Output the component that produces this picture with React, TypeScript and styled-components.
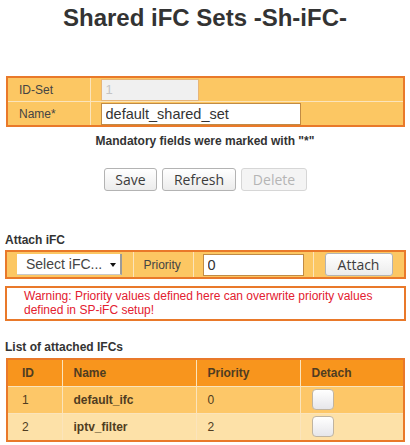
import styled, { createGlobalStyle } from "styled-components";

const GlobalStyle = createGlobalStyle`
  body {
    margin: 0;
    background: #ffffff;
    font-family: "Liberation Sans", Arial, sans-serif;
    font-size: 12px;
    color: #333333;
  }
`;

const ORANGE = "#e9792a";
const FILL = "#fcc763";
const LINE = "#fbe4bb";

const Page = styled.div`
  width: 410px;
  padding: 0 5px;
  box-sizing: border-box;
`;

const Title = styled.h1`
  margin: 4px 0 0;
  font-size: 24px;
  line-height: 28px;
  font-weight: bold;
  text-align: center;
  color: #333333;
`;

const FormTable = styled.table`
  width: 399px;
  margin: 44px 0 0 1px;
  border-collapse: collapse;
  border: 2px solid ${ORANGE};
  background: ${FILL};
  td {
    height: 23px;
    padding: 0;
    border: 1px solid ${LINE};
  }
`;

const LabelCell = styled.td`
  width: 83px;
  padding-left: 11px !important;
  box-sizing: border-box;
  color: #444444;
`;

const ValueCell = styled.td`
  padding-left: 10px !important;
`;

const TextInput = styled.input<{ $width: number; $disabled?: boolean }>`
  display: block;
  box-sizing: border-box;
  width: ${(p) => p.$width}px;
  height: 22px;
  margin: 0;
  padding: 0 4px;
  border: 1px solid ${(p) => (p.$disabled ? "#e7b577" : "#c18b45")};
  background: ${(p) => (p.$disabled ? "#f0f0f0" : "#ffffff")};
  color: ${(p) => (p.$disabled ? "#c4c4c4" : "#333333")};
  font-family: "Liberation Sans", Arial, sans-serif;
  font-size: ${(p) => (p.$disabled ? 13 : 14.5)}px;
  outline: none;
`;

const Note = styled.p`
  margin: 7px 0 0;
  font-weight: bold;
  text-align: center;
  line-height: 14px;
`;

const ButtonRow = styled.div`
  display: flex;
  justify-content: center;
  gap: 5px;
  margin-top: 20px;
  padding-left: 1px;
`;

const Button = styled.button<{ $width: number }>`
  box-sizing: border-box;
  width: ${(p) => p.$width}px;
  height: 23px;
  padding: 0;
  border: 1px solid #b3b3b3;
  border-radius: 3px;
  background: linear-gradient(#ffffff, #ececec);
  color: #3c3c3c;
  font-family: "Open Sans", "DejaVu Sans", sans-serif;
  font-size: 14px;
  line-height: 21px;
  &:disabled {
    border-color: #d6d6d6;
    background: #f4f4f4;
    color: #b5b5b5;
  }
`;

const SectionLabel = styled.div<{ $top: number }>`
  margin-top: ${(p) => p.$top}px;
  font-weight: bold;
  line-height: 14px;
  color: #333333;
`;

const AttachTable = styled.table`
  width: 401px;
  margin-top: 3px;
  border-collapse: collapse;
  border: 2px solid ${ORANGE};
  background: ${FILL};
  td {
    height: 27px;
    padding: 0;
    border: 1px solid ${LINE};
  }
`;

const Cell = styled.td<{ $width?: number; $pad?: number }>`
  width: ${(p) => (p.$width ? `${p.$width}px` : "auto")};
  padding-left: ${(p) => p.$pad ?? 0}px !important;
  box-sizing: border-box;
`;

const SelectBox = styled.div`
  position: relative;
  display: flex;
  align-items: center;
  box-sizing: border-box;
  width: 105px;
  height: 21px;
  padding-left: 9px;
  background: #ffffff;
  border-right: 2px solid #9a9a9a;
  border-bottom: 1px solid #c9c9c9;
  color: #444444;
  font-size: 14px;
`;

const SelectArrow = styled.span`
  position: absolute;
  right: 4px;
  top: 9px;
  width: 0;
  height: 0;
  border-left: 3px solid transparent;
  border-right: 3px solid transparent;
  border-top: 4px solid #111111;
`;

const AttachLabel = styled.span`
  color: #444444;
`;

const Warning = styled.div`
  margin-top: 7px;
  box-sizing: border-box;
  width: 401px;
  height: 35px;
  padding: 1px 0 0 17px;
  border: 2px solid ${ORANGE};
  color: #e3202f;
  line-height: 14px;
`;

const ListTable = styled.table`
  width: 399px;
  margin: 4px 0 0 1px;
  border-collapse: collapse;
  border: 2px solid ${ORANGE};
  th,
  td {
    padding: 0;
    border: 1px solid ${LINE};
    text-align: left;
    color: #4f3c21;
  }
  th {
    height: 27px;
    background: #f8951d;
    font-weight: bold;
  }
`;

const HeadCell = styled.th<{ $width: number; $pad: number }>`
  width: ${(p) => p.$width}px;
  padding-left: ${(p) => p.$pad}px !important;
  box-sizing: border-box;
`;

const Row = styled.tr<{ $alt?: boolean }>`
  background: ${(p) => (p.$alt ? "#fde1a8" : "#fdc768")};
  td {
    height: 26px;
  }
`;

const BodyCell = styled.td<{ $pad: number; $bold?: boolean }>`
  padding-left: ${(p) => p.$pad}px !important;
  font-weight: ${(p) => (p.$bold ? "bold" : "normal")};
`;

const DetachButton = styled.button`
  display: block;
  box-sizing: border-box;
  width: 22px;
  height: 21px;
  padding: 0;
  border: 1px solid #c0b4a0;
  border-radius: 4px;
  background: linear-gradient(#ffffff, #e6e6ea);
`;

const rows = [
  { id: 1, name: "default_ifc", priority: 0 },
  { id: 2, name: "iptv_filter", priority: 2 },
];

export default function App() {
  return (
    <Page>
      <GlobalStyle />
      <Title>Shared iFC Sets -Sh-iFC-</Title>

      <FormTable>
        <tbody>
          <tr>
            <LabelCell>ID-Set</LabelCell>
            <ValueCell>
              <TextInput $width={98} $disabled value="1" disabled readOnly />
            </ValueCell>
          </tr>
          <tr>
            <LabelCell>Name*</LabelCell>
            <ValueCell>
              <TextInput $width={200} defaultValue="default_shared_set" />
            </ValueCell>
          </tr>
        </tbody>
      </FormTable>

      <Note>Mandatory fields were marked with "*"</Note>

      <ButtonRow>
        <Button $width={53}>Save</Button>
        <Button $width={74}>Refresh</Button>
        <Button $width={66} disabled>
          Delete
        </Button>
      </ButtonRow>

      <SectionLabel $top={42}>Attach iFC</SectionLabel>
      <AttachTable>
        <tbody>
          <tr>
            <Cell $width={127} $pad={10}>
              <SelectBox>
                Select iFC...
                <SelectArrow />
              </SelectBox>
            </Cell>
            <Cell $width={60} $pad={10}>
              <AttachLabel>Priority</AttachLabel>
            </Cell>
            <Cell $width={120} $pad={9}>
              <TextInput $width={101} defaultValue="0" />
            </Cell>
            <Cell $pad={11}>
              <Button $width={68}>Attach</Button>
            </Cell>
          </tr>
        </tbody>
      </AttachTable>

      <Warning>
        Warning: Priority values defined here can overwrite priority values
        defined in SP-iFC setup!
      </Warning>

      <SectionLabel $top={19}>List of attached IFCs</SectionLabel>
      <ListTable>
        <thead>
          <tr>
            <HeadCell $width={55} $pad={14}>
              ID
            </HeadCell>
            <HeadCell $width={134} $pad={11}>
              Name
            </HeadCell>
            <HeadCell $width={104} $pad={11}>
              Priority
            </HeadCell>
            <HeadCell $width={104} $pad={11}>
              Detach
            </HeadCell>
          </tr>
        </thead>
        <tbody>
          {rows.map((r, i) => (
            <Row key={r.id} $alt={i % 2 === 1}>
              <BodyCell $pad={14}>{r.id}</BodyCell>
              <BodyCell $pad={11} $bold>
                {r.name}
              </BodyCell>
              <BodyCell $pad={11}>{r.priority}</BodyCell>
              <BodyCell $pad={11}>
                <DetachButton />
              </BodyCell>
            </Row>
          ))}
        </tbody>
      </ListTable>
    </Page>
  );
}
